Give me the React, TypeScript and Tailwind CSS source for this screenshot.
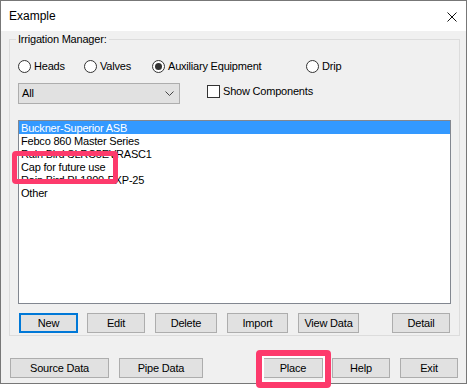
const ITEMS = [
  "Buckner-Superior ASB",
  "Febco 860 Master Series",
  "Rain Bird SLRC5EVRASC1",
  "Cap for future use",
  "Rain Bird PL1800-EXP-25",
  "Other",
];

function Radio({ label, checked, width }: { label: string; checked?: boolean; width: string }) {
  return (
    <div className={"flex h-[13px] items-center gap-[3px] " + width}>
      <span className="flex h-[13px] w-[13px] shrink-0 items-center justify-center rounded-full border border-[#333] bg-white">
        {checked && <span className="h-[7px] w-[7px] rounded-full bg-[#333]" />}
      </span>
      <span>{label}</span>
    </div>
  );
}

function Btn({ label, className, focused }: { label: string; className: string; focused?: boolean }) {
  return (
    <div
      className={
        "flex h-[20px] shrink-0 items-center justify-center bg-[#e1e1e1] " +
        (focused ? "border-2 border-[#0078d7] " : "border border-[#adadad] ") +
        className
      }
    >
      {label}
    </div>
  );
}

export default function App() {
  return (
    <div className="relative h-[389px] w-[467px] bg-white font-['Liberation_Sans',Arial,sans-serif] text-[11px] leading-[13px] tracking-[-0.2px] text-black">
      <div className="flex h-[384px] w-[467px] flex-col border border-[#777] bg-[#f0f0f0]">
        {/* title bar */}
        <div className="flex h-[30px] shrink-0 items-center justify-between bg-white pl-[8px] pr-[9px]">
          <span className="text-[12px] tracking-normal">Example</span>
          <svg width="10" height="10" viewBox="0 0 10 10" className="mt-[1px]">
            <path d="M0.5 0.5 L9.5 9.5 M9.5 0.5 L0.5 9.5" stroke="#111" strokeWidth="1" />
          </svg>
        </div>

        {/* body */}
        <div className="flex flex-1 flex-col">
          <fieldset className="ml-[8px] mt-[2px] w-[451px] border border-[#dcdcdc] px-[8px] pb-[2px]">
            <legend className="ml-[-2px] px-[2px] leading-[13px]">Irrigation Manager:</legend>

            <div className="mt-[14px] flex items-center">
              <Radio label="Heads" width="w-[66px]" />
              <Radio label="Valves" width="w-[68px]" />
              <Radio label="Auxiliary Equipment" checked width="w-[154px]" />
              <Radio label="Drip" width="w-[60px]" />
            </div>

            <div className="mt-[10px] flex items-start">
              <div className="flex h-[21px] w-[162px] items-center justify-between border border-[#adadad] bg-[#e1e1e1] pl-[3px] pr-[5px]">
                <span>All</span>
                <svg width="9" height="5" viewBox="0 0 9 5">
                  <path d="M0.5 0.5 L4.5 4.5 L8.5 0.5" fill="none" stroke="#444" strokeWidth="1" />
                </svg>
              </div>
              <div className="ml-[27px] mt-[2px] flex items-center gap-[3px]">
                <span className="h-[13px] w-[13px] border border-[#333] bg-white" />
                <span>Show Components</span>
              </div>
            </div>

            <div className="mt-[16px] flex h-[184px] w-[433px] flex-col border border-[#828790] bg-white">
              {ITEMS.map((item, i) => (
                <div
                  key={item}
                  className={
                    "h-[13px] shrink-0 whitespace-nowrap pl-[2px] pt-[1px] " +
                    (i === 0 ? "bg-[#3399ff] text-white" : "")
                  }
                >
                  {item}
                </div>
              ))}
            </div>

            <div className="mt-[9px] flex">
              <Btn label="New" focused className="ml-[1px] w-[59px]" />
              <Btn label="Edit" className="ml-[9px] w-[58px]" />
              <Btn label="Delete" className="ml-[10px] w-[62px]" />
              <Btn label="Import" className="ml-[10px] w-[61px]" />
              <Btn label="View Data" className="ml-[10px] w-[61px]" />
              <Btn label="Detail" className="ml-[33px] w-[58px]" />
            </div>
          </fieldset>

          <div className="mt-[22px] flex">
            <Btn label="Source Data" className="ml-[9px] w-[99px]" />
            <Btn label="Pipe Data" className="ml-[10px] w-[84px]" />
            <Btn label="Place" className="ml-[60px] w-[60px]" />
            <Btn label="Help" className="ml-[9px] w-[58px]" />
            <Btn label="Exit" className="ml-[10px] w-[58px]" />
          </div>
        </div>
      </div>

      {/* annotation highlights */}
      <div className="absolute left-[12px] top-[151px] h-[33px] w-[106px] rounded-[4px] border-[5px] border-[#fd3a6c]" />
      <div className="absolute left-[256px] top-[350px] h-[38px] w-[75px] rounded-[4px] border-[6px] border-[#fd3a6c] shadow-[inset_0_0_0_2px_white]" />
    </div>
  );
}
